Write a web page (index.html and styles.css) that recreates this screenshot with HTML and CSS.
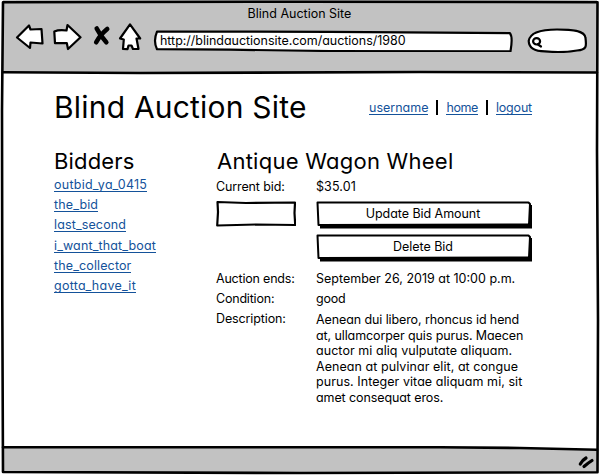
FILE: index.html
```
<!DOCTYPE html>
<html lang="en">
<head>
<meta charset="utf-8">
<title>Blind Auction Site</title>
<link rel="stylesheet" href="styles.css">
</head>
<body>
<div class="window">
  <header class="chrome">
    <div class="chrome-title">Blind Auction Site</div>
    <div class="toolbar">
      <svg class="icon back" viewBox="14 22 30 30"><path d="M17 37.5L29 25.5L30.5 29.5L41.5 29L42.5 43.5L30.5 42.5L30 48Z"/></svg>
      <svg class="icon forward" viewBox="52 22 30 30"><path d="M54.3 31.5Q59 29.5 66.5 30.5L67.5 25L80.5 37.2L68 49L66.8 43L55 43.2Z"/></svg>
      <svg class="icon stop" viewBox="92 22 20 30"><path d="M96.7 28.5Q100.5 36 106.3 42.3M107.2 29Q100 35 96.2 42.3"/></svg>
      <svg class="icon home" viewBox="118 22 24 30"><path d="M130 24.3L140.2 38.5L136.5 38.5L138.5 49L133 49L131.5 45.5L128.5 45.5L127.5 49.2L123 49L123.8 39.5L120 38.5Z"/></svg>
      <div class="url">
        <svg class="sketch" viewBox="153 22 361 30"><path d="M157 31.6L330 31.8L440 32.7L510 33.2Q513 37 510.5 51.4L330 51L230 49.7L157 49.2Q153 41 157 31.6Z"/></svg>
        <span class="url-text">http://blindauctionsite.com/auctions/1980</span>
      </div>
      <svg class="icon search" viewBox="526 22 62 31"><path d="M528.7 41C530 32 541 29.5 557 29.5C571 29.5 585 30.5 585.5 38C586.5 46 587 50 577 50.5C566 52.3 554 52.3 545 51.3C534 51.3 529 48 528.7 41Z"/><ellipse cx="536.6" cy="41.3" rx="3.5" ry="3.2"/><path d="M538 44.5L541 46.5"/></svg>
    </div>
  </header>

  <main class="page">
    <div class="masthead">
      <h1>Blind Auction Site</h1>
      <nav class="account">
        <a>username</a><i></i><a class="narrow">home</a><i></i><a class="snug">logout</a>
      </nav>
    </div>
    <div class="columns">
      <section class="bidders">
        <h2>Bidders</h2>
        <ul>
          <li><a class="wide">outbid_ya_0415</a></li>
          <li><a>the_bid</a></li>
          <li><a>last_second</a></li>
          <li><a>i_want_that_boat</a></li>
          <li><a>the_collector</a></li>
          <li><a class="wide">gotta_have_it</a></li>
        </ul>
      </section>
      <section class="item">
        <h2 class="item-title">Antique Wagon Wheel</h2>
        <div class="details">
          <span>Current bid:</span><span class="price">$35.01</span>
          <div class="field"><svg viewBox="0 0 80 27"><path d="M1.5 2L30 3L79 2.5L78.5 13L79.2 25L40 24.5L1.2 25.5L2 12Z"/></svg></div>
          <div class="actions">
            <div class="button"><svg class="sketch" viewBox="0 0 217 30"><path class="shadow" d="M4 24L213 24L213 5L216 5L216 28.5L4 28.5Z"/><path d="M1.5 2.5L212.5 2.5L214 4L213 24.5L2.5 25L2 14Z"/></svg><span>Update Bid Amount</span></div>
            <div class="button"><svg class="sketch" viewBox="0 0 217 30"><path class="shadow" d="M4 24L213 24L213 5L216 5L216 28.5L4 28.5Z"/><path d="M1.5 2.5L212.5 2.5L214 4L213 24.5L2.5 25L2 14Z"/></svg><span>Delete Bid</span></div>
          </div>
          <span class="snug">Auction ends:</span><span class="date">September 26, 2019 at 10:00 p.m.</span>
          <span class="snug">Condition:</span><span class="snug">good</span>
          <span>Description:</span>
          <p class="description"><span class="tight">Aenean dui libero, rhoncus id hend</span><br><span class="tight">at, ullamcorper quis purus. Maecen</span><br>auctor mi aliq vulputate aliquam.<br>Aenean at pulvinar elit, at congue<br>purus. Integer vitae aliquam mi, sit<br><span class="tight">amet consequat eros.</span></p>
        </div>
      </section>
    </div>
  </main>

  <svg class="frame" viewBox="0 0 600 475">
    <path class="bar" d="M3 447.5L500 447.5L597 450L597 472L3 472Z"/>
    <path d="M3 2.3L300 1.7L597.5 2.2L597 150L598 320L597.5 472.3L300 473L3 472L2.3 300L2 110Z"/>
    <path d="M3 72.3L140 73L420 72L597 72.5M3 447.3L440 447.3L520 448L597 449.8"/>
    <path class="grip-mark" d="M580.3 464Q582.5 460 586 458M584 466.5Q588 463 592 460.5"/>
  </svg>
</div>
</body>
</html>
```
FILE: styles.css
```
* { box-sizing: border-box; }
body {
  margin: 0;
  background: #fff;
  color: #000;
  font: 12.5px/20px Inter, "Liberation Sans", sans-serif;
  font-feature-settings: "cv11";
}
h1, h2, p, ul { margin: 0; padding: 0; font-weight: 400; }
ul { list-style: none; }
svg { display: block; fill: #fff; stroke: #000; stroke-width: 2.2; stroke-linejoin: round; stroke-linecap: round; }

.window { position: relative; width: 600px; height: 475px; display: flex; flex-direction: column; overflow: hidden; }
.chrome { height: 73px; margin: 0 3px; padding-top: 2px; background: #c2c2c2; }
.chrome-title { height: 20px; line-height: 24px; text-align: center; padding-right: 1px; }
.toolbar { display: flex; height: 31px; padding-left: 11px; }
.icon { height: 30px; flex: none; }
.back, .forward { width: 30px; }
.forward { margin-left: 8px; }
.stop { width: 20px; margin-left: 10px; fill: none; stroke-width: 4.6; }
.home { width: 24px; margin-left: 6px; }
.url { position: relative; width: 361px; height: 30px; margin-left: 11px; padding: 9px 0 0 7px; letter-spacing: -0.03px; }
.url-text { position: relative; }
.sketch { position: absolute; inset: 0; width: 100%; height: 100%; }
.search { width: 62px; height: 31px; margin-left: 12px; }

.page { flex: 1; padding: 15px 0 0 54px; }
.masthead { display: flex; height: 60px; }
h1 { width: 315px; font-size: 30px; line-height: 38px; letter-spacing: 0.2px; }
.account { display: flex; align-items: flex-start; padding-top: 12px; line-height: 15px; }
.account i { width: 2px; height: 15px; margin: 0 8px; background: #000; }
a { display: inline-block; height: 15px; line-height: 15px; color: #14529a; border-bottom: 1px solid #14529a; letter-spacing: 0; }
.account .narrow { letter-spacing: -0.4px; }
.snug { letter-spacing: -0.2px; }

.columns { display: grid; grid-template-columns: 163px 320px; }
h2 { font-size: 22px; line-height: 26px; letter-spacing: 0.15px; }
.item-title { letter-spacing: 0.25px; }
.bidders li { height: 20.2px; padding-top: 3px; line-height: 15px; }
.bidders a { display: block; width: max-content; letter-spacing: 0.13px; }
.bidders a.wide { letter-spacing: 0.26px; }

.details { display: grid; grid-template-columns: 100px 220px; margin-left: -1px; padding-top: 3px; letter-spacing: -0.12px; }
.price { letter-spacing: 0.1px; }
.field { padding-top: 3px; }
.field svg { width: 80px; height: 27px; }
.actions { height: 72px; padding-top: 3px; }
.button { position: relative; width: 217px; height: 30px; margin-bottom: 3px; padding-right: 3px; text-align: center; line-height: 27px; letter-spacing: -0.05px; }
.button span { position: relative; }
.button svg { stroke-width: 2; }
.shadow { fill: #000; stroke: none; }
.date { letter-spacing: 0; }
.description { padding-top: 3px; line-height: 15.6px; letter-spacing: 0.06px; }
.tight { letter-spacing: -0.1px; }

.frame { position: absolute; inset: 0; width: 600px; height: 475px; fill: none; stroke-width: 2.6; pointer-events: none; }
.frame .bar { fill: #c2c2c2; stroke: none; }
.frame .grip-mark { stroke-width: 3.2; }
```
